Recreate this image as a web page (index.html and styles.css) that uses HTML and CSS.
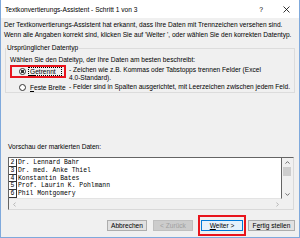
FILE: index.html
```html
<!DOCTYPE html>
<html lang="de">
<head>
<meta charset="utf-8">
<title>Textkonvertierungs-Assistent</title>
<link rel="stylesheet" href="styles.css">
</head>
<body>
<div class="window">
  <header class="titlebar">
    <span class="title">Textkonvertierungs-Assistent - Schritt 1 von 3</span>
    <span class="help">?</span>
    <svg class="close" viewBox="0 0 7 7" width="7" height="7"><path d="M0.5 0.5L6.5 6.5M6.5 0.5L0.5 6.5" stroke="#000" stroke-width="0.8" fill="none"/></svg>
  </header>
  <div class="intro">
    <p>Der Textkonvertierungs-Assistent hat erkannt, dass Ihre Daten mit Trennzeichen versehen sind.</p>
    <p>Wenn alle Angaben korrekt sind, klicken Sie auf 'Weiter ', oder wählen Sie den korrekten Datentyp.</p>
  </div>
  <fieldset class="group">
    <legend>Ursprünglicher Datentyp</legend>
    <p class="prompt">Wählen Sie den Dateityp, der Ihre Daten am besten beschreibt:</p>
    <div class="option first">
      <div class="choice marked"><span class="radio checked"></span><span class="label focus"><u>G</u>etrennt</span></div>
      <div class="desc">- Zeichen wie z.B. Kommas oder Tabstopps trennen Felder (Excel<br>4.0-Standard).</div>
    </div>
    <div class="option second">
      <div class="choice"><span class="radio"></span><span class="label"><u>F</u>este Breite</span></div>
      <div class="desc">- Felder sind in Spalten ausgerichtet, mit Leerzeichen zwischen jedem Feld.</div>
    </div>
  </fieldset>
  <p class="preview-label">Vorschau der markierten Daten:</p>
  <div class="preview">
    <div class="data">
      <div class="row"><span class="num">2</span><span class="cell">Dr. Lennard Bahr</span></div>
      <div class="row"><span class="num">3</span><span class="cell">Dr. med. Anke Thiel</span></div>
      <div class="row"><span class="num">4</span><span class="cell">Konstantin Bates</span></div>
      <div class="row"><span class="num">5</span><span class="cell">Prof. Laurin K. Pohlmann</span></div>
      <div class="row"><span class="num">6</span><span class="cell">Phil Montgomery</span></div>
    </div>
    <div class="vscroll">
      <span class="arrow"><svg viewBox="0 0 5 3" width="5" height="3"><path d="M0.5 2.6L2.5 0.6L4.5 2.6" stroke="#606060" stroke-width="0.9" fill="none"/></svg></span>
      <span class="thumb"></span>
      <span class="track"></span>
      <span class="arrow"><svg viewBox="0 0 5 3" width="5" height="3"><path d="M0.5 0.4L2.5 2.4L4.5 0.4" stroke="#606060" stroke-width="0.9" fill="none"/></svg></span>
    </div>
    <div class="hscroll">
      <span class="arrow"><svg viewBox="0 0 3 5" width="3" height="5"><path d="M2.6 0.5L0.6 2.5L2.6 4.5" stroke="#b0b0b0" stroke-width="0.9" fill="none"/></svg></span>
      <span class="arrow"><svg viewBox="0 0 3 5" width="3" height="5"><path d="M0.4 0.5L2.4 2.5L0.4 4.5" stroke="#b0b0b0" stroke-width="0.9" fill="none"/></svg></span>
    </div>
    <div class="corner"></div>
  </div>
  <div class="buttons">
    <button class="btn cancel">Abbrechen</button>
    <button class="btn back" disabled>&lt; Zurück</button>
    <span class="mark"><button class="btn next"><u>W</u>eiter &gt;</button></span>
    <button class="btn finish">F<u>e</u>rtig stellen</button>
  </div>
</div>
</body>
</html>
```
FILE: styles.css
```css
body {
  margin: 0;
  width: 300px;
  height: 238px;
  overflow: hidden;
  font-family: "Liberation Sans", Arial, sans-serif;
  font-size: 6.6px;
  color: #000;
}

.window {
  box-sizing: border-box;
  width: 300px;
  height: 238px;
  background: #f0f0f0;
  border: 1px solid #7fa9dc;
  border-top: 0;
  display: flex;
  flex-direction: column;
}

.titlebar {
  height: 18px;
  flex: none;
  background: #fff;
  display: flex;
  align-items: center;
  padding-left: 4px;
  white-space: nowrap;
}

.title {
  flex: 1;
}

.help {
  margin-right: 20px;
  font-size: 6.8px;
}

.close {
  margin-right: 9px;
}

.intro {
  margin-top: 2px;
  padding-left: 3px;
  white-space: nowrap;
}

p {
  margin: 0;
}

.intro p {
  line-height: 10px;
}

.group {
  margin: 4px 4px 0 4px;
  padding: 0 4px 1px 4px;
  border: 1px solid #dcdcdc;
  min-width: 0;
}

.group legend {
  margin-left: -4px;
  padding: 0 1px;
  line-height: 8px;
}

.prompt {
  margin-top: 3px;
  line-height: 9px;
}

.option {
  display: flex;
}

.option.first {
  margin-top: 1px;
}

.option.second {
  margin-top: 1px;
}

.choice {
  box-sizing: border-box;
  width: 56px;
  height: 13px;
  flex: none;
  display: flex;
  align-items: center;
  padding-left: 9px;
}

.option.second .choice {
  height: 8px;
}

.marked {
  outline: 2px solid #e8141c;
  outline-offset: -2px;
}

.radio {
  box-sizing: border-box;
  width: 7px;
  height: 7px;
  flex: none;
  border: 1px solid #333;
  border-radius: 50%;
  background: #fff;
  margin-right: 2px;
}

.radio.checked {
  background: radial-gradient(circle, #333 0, #333 1.4px, #fff 1.9px);
}

.label {
  box-sizing: border-box;
  padding: 0 1px;
  line-height: 7px;
  border: 1px dotted transparent;
  white-space: nowrap;
}

.label.focus {
  width: 34px;
  border-color: #000;
}

.desc {
  margin-left: 3px;
  line-height: 8px;
  padding-top: 1px;
  white-space: nowrap;
}

.option.second .desc {
  padding-top: 0;
}

.preview-label {
  margin: 49px 0 6px 7px;
  line-height: 9px;
}

.preview {
  box-sizing: border-box;
  height: 53px;
  flex: none;
  margin: 0 5px 0 7px;
  display: grid;
  grid-template-columns: 1fr 11px;
  grid-template-rows: 1fr 10px;
  border: 1px solid;
  border-color: #646464 #d9d9d9 #d9d9d9 #646464;
}

.data {
  background: #fff;
  border-right: 1px solid #646464;
  border-bottom: 1px solid #e3e3e3;
  padding-top: 1px;
  font-family: "Liberation Mono", "Courier New", monospace;
  font-size: 6.4px;
  overflow: hidden;
}

.row {
  display: flex;
  height: 7.75px;
  line-height: 7.75px;
}

.num {
  box-sizing: border-box;
  width: 8px;
  height: 100%;
  border-right: 1px solid #333;
  border-bottom: 1px solid #333;
  text-align: center;
}

.cell {
  padding-left: 1px;
  white-space: pre;
}

.vscroll {
  display: flex;
  flex-direction: column;
  align-items: stretch;
}

.vscroll .arrow {
  height: 9px;
  display: flex;
  align-items: center;
  justify-content: center;
}

.thumb {
  height: 9px;
  margin: 0 2px 0 1px;
  background: #cdcdcd;
}

.track {
  flex: 1;
}

.hscroll {
  display: flex;
  justify-content: space-between;
  padding: 0 1px;
}

.hscroll .arrow {
  width: 8px;
  display: flex;
  align-items: center;
  justify-content: center;
}

.buttons {
  flex: none;
  height: 21px;
  margin-top: 5px;
  display: flex;
  align-items: center;
  justify-content: flex-end;
  padding-right: 4px;
}

.btn {
  box-sizing: border-box;
  height: 11px;
  padding: 0;
  font: inherit;
  line-height: 9px;
  color: #000;
  background: #e1e1e1;
  border: 1px solid #adadad;
  white-space: nowrap;
}

.cancel {
  width: 40px;
  margin-right: 6px;
}

.back {
  width: 40px;
  color: #a0a0a0;
  background: #cccccc;
  border-color: #bfbfbf;
}

.mark {
  display: flex;
  margin-left: 5px;
  margin-right: 2px;
  padding: 3px 1px;
  border: 2px solid #e8141c;
}

.next {
  width: 42px;
  background: #e5f1fb;
  border-color: #0078d7;
}

.finish {
  width: 47px;
}
```
